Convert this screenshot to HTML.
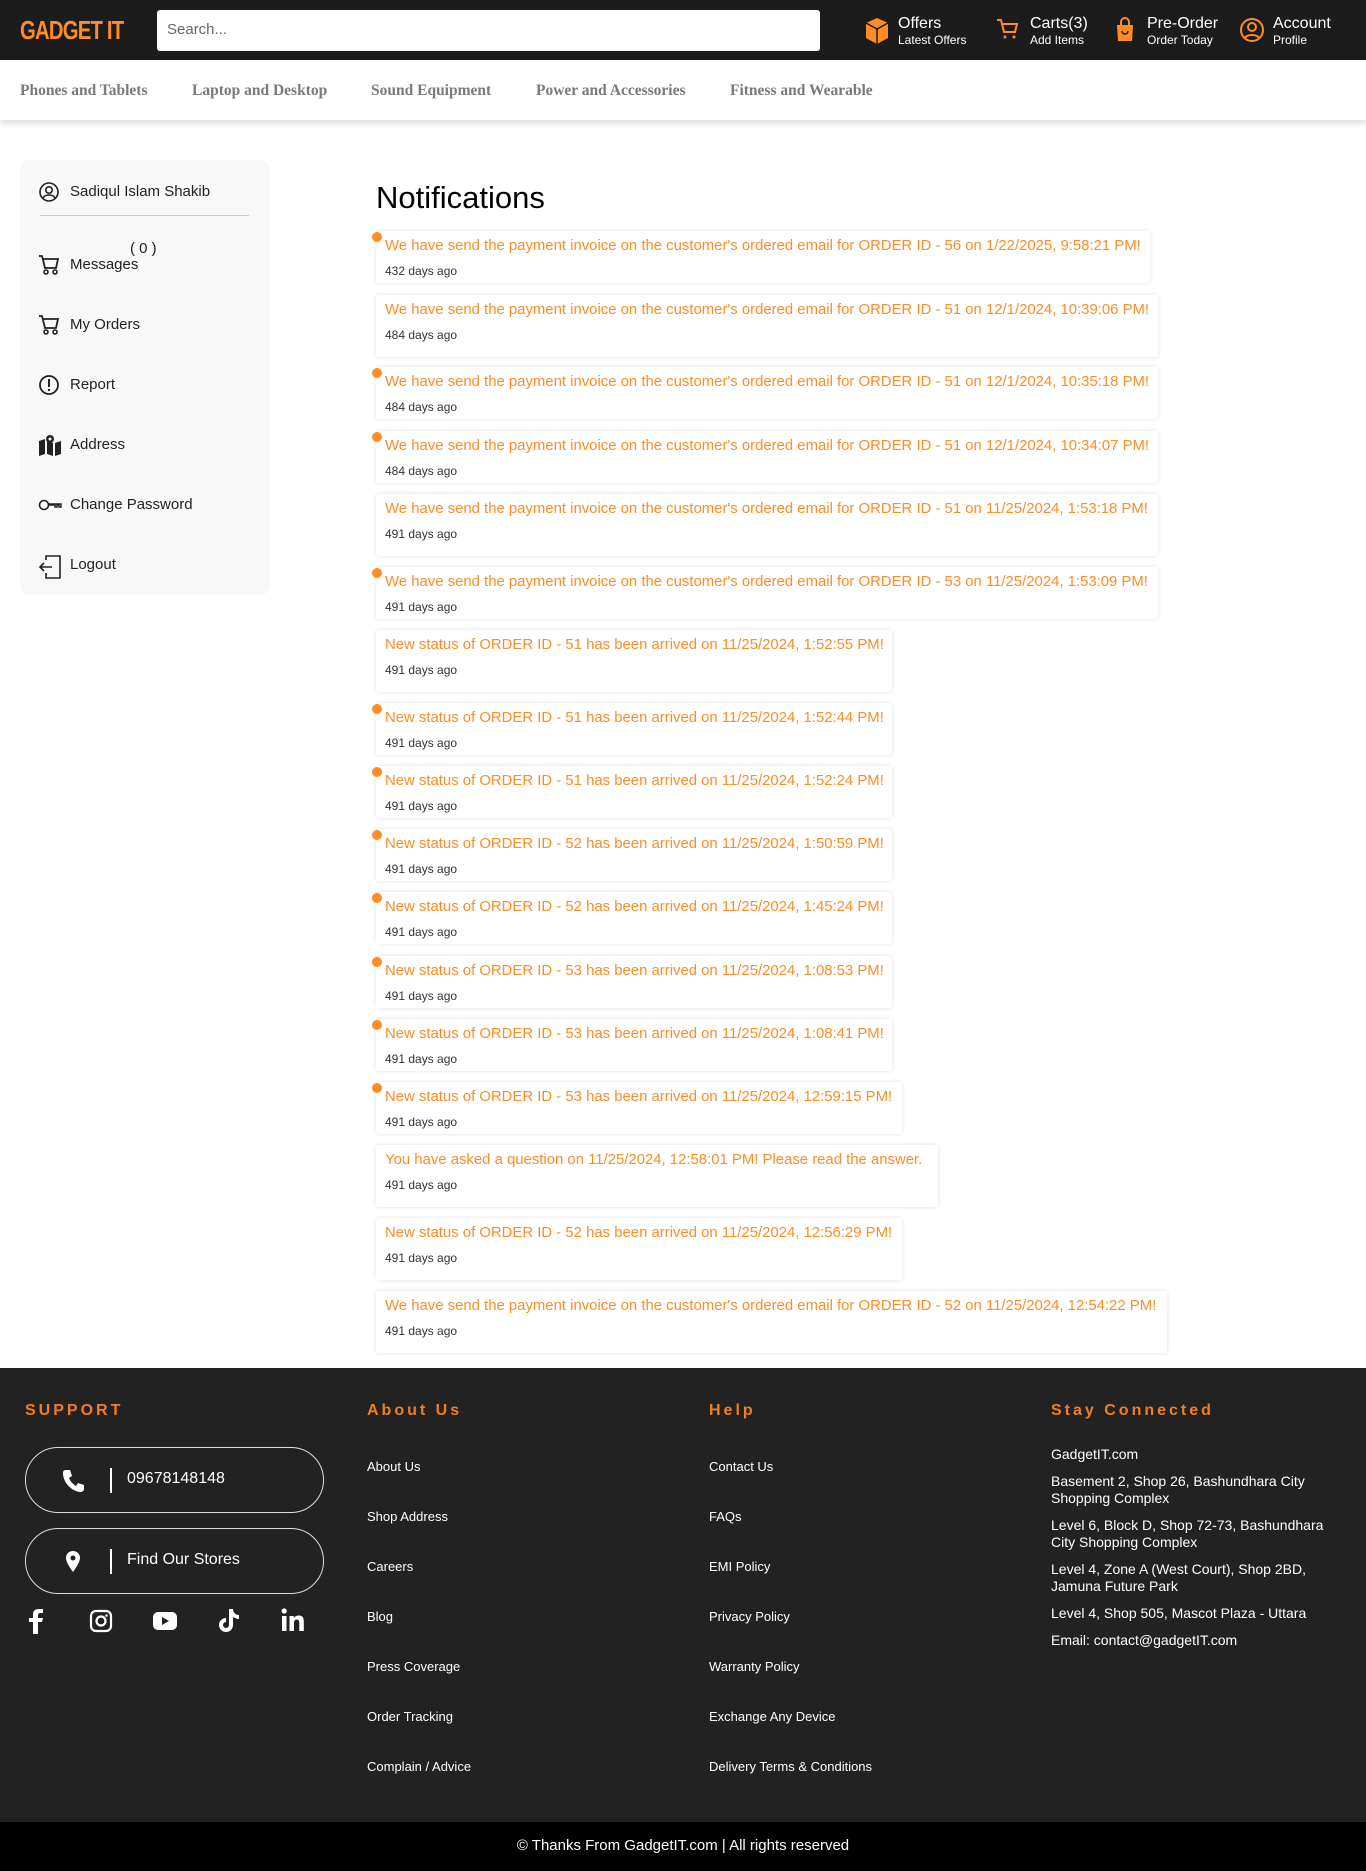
<!DOCTYPE html>
<html><head><meta charset="utf-8">
<style>
*{margin:0;padding:0;box-sizing:border-box}
body{width:1366px;height:1871px;position:relative;background:#fff;font-family:"Liberation Sans",sans-serif;overflow:hidden}
.hdr{position:absolute;left:0;top:0;width:1366px;height:60px;background:#1c1c1c;box-shadow:0 3px 6px rgba(0,0,0,.5)}
.logo{position:absolute;left:20px;top:14px;color:#ff8c26;font:bold 26px/32px "Liberation Sans Narrow","Liberation Sans",sans-serif;transform:scaleX(.78);transform-origin:left;letter-spacing:-1px}
.search{position:absolute;left:157px;top:10px;width:663px;height:41px;background:#fff;border-radius:3px;color:#666;font-size:15px;padding:11px 10px}
.hi{position:absolute;top:14px;color:#fff}
.hi b{display:block;font-weight:normal;font-size:16px;line-height:19px}
.hi s{display:block;text-decoration:none;font-size:12px;line-height:14px}
.hi svg{position:absolute;left:-34px;top:3px}
.nav{position:absolute;left:0;top:60px;width:1366px;height:60px;background:#fff;box-shadow:0 3px 6px rgba(0,0,0,.15)}
.nav span{position:absolute;top:22px;font:bold 15.5px "Liberation Serif",serif;color:#7a7a7a}
.side{position:absolute;left:20px;top:160px;width:250px;height:435px;background:#f8f8f8;border-radius:10px}
.si{position:absolute;left:50px;font-size:15px;color:#222}
.si svg{position:absolute;left:-12px;top:-2px}
.si{padding-left:20px}
h1{position:absolute;left:376px;top:180px;font-weight:normal;font-size:31px;color:#000}
.c{position:absolute;left:376px;background:#fff;box-shadow:0 0 5px rgba(0,0,0,.12);border-radius:3px;padding:6px 0 0 9px;white-space:nowrap;overflow:hidden}
.c p{color:#ff8c26;font-size:14.9px;line-height:18px}
.c i{display:block;font-style:normal;color:#333;font-size:12px;margin-top:9px}
.d{position:absolute;left:372px;width:10px;height:10px;border-radius:50%;background:#ff8c26}
.ft{position:absolute;left:0;top:1368px;width:1366px;height:454px;background:#222}
.bot{position:absolute;left:0;top:1822px;width:1366px;height:49px;background:#000;color:#fff;font-size:15px;text-align:center;line-height:48px}
.fh{position:absolute;top:34px;color:#f07f1f;font-weight:bold;font-size:16px;letter-spacing:3px}
.fl{position:absolute;color:#fff;font-size:13px}
.pill{position:absolute;left:25px;width:299px;height:66px;border:1.5px solid #ddd;border-radius:33px;color:#fff;font-size:16px}
.pill .bar{position:absolute;left:84px;top:20px;width:2px;height:25px;background:#fff}
.pill span{position:absolute;left:101px;top:22px}
</style></head><body>
<div class="hdr">
<div class="logo">GADGET IT</div>
<div class="search">Search...</div>
<div class="hi" style="left:898px"><svg width="26" height="28" viewBox="0 0 26 28"><path d="M13 1 2 6v15l11 6 11-6V6z" fill="#ff8c26"/><path d="M2 6l11 6 11-6M13 12v15" stroke="#1c1c1c" stroke-width="1.5" fill="none"/></svg><b>Offers</b><s>Latest Offers</s></div>
<div class="hi" style="left:1030px"><svg width="24" height="26" viewBox="0 0 24 26"><path d="M1 3h4l3 12h11l2-8H7" stroke="#ff8c26" stroke-width="2" fill="none"/><circle cx="9" cy="20" r="1.5" fill="#ff8c26"/><circle cx="18" cy="20" r="1.5" fill="#ff8c26"/></svg><b>Carts(3)</b><s>Add Items</s></div>
<div class="hi" style="left:1147px"><svg width="24" height="26" viewBox="0 0 24 26"><path d="M4 8h16l-1 16H5z" fill="#ff8c26"/><path d="M8 8V5a4 4 0 0 1 8 0v3" stroke="#ff8c26" stroke-width="2" fill="none"/><path d="M9 14a3 3 0 0 0 6 0" stroke="#1c1c1c" stroke-width="1.5" fill="none"/></svg><b>Pre-Order</b><s>Order Today</s></div>
<div class="hi" style="left:1273px"><svg width="26" height="26" viewBox="0 0 26 26"><circle cx="13" cy="13" r="11" stroke="#ff8c26" stroke-width="2" fill="none"/><circle cx="13" cy="10" r="4" stroke="#ff8c26" stroke-width="2" fill="none"/><path d="M6 21c2-4 12-4 14 0" stroke="#ff8c26" stroke-width="2" fill="none"/></svg><b>Account</b><s>Profile</s></div>
</div>
<div class="nav">
<span style="left:20px">Phones and Tablets</span><span style="left:192px">Laptop and Desktop</span><span style="left:371px">Sound Equipment</span><span style="left:536px">Power and Accessories</span><span style="left:730px">Fitness and Wearable</span>
</div>
<div class="side">
<div style="position:absolute;left:20px;top:55px;width:209px;height:1px;background:#ccc"></div>
</div>
<div class="si" style="left:50px;top:183px"><svg width="22" height="22" viewBox="0 0 22 22"><circle cx="11" cy="11" r="9" stroke="#222" stroke-width="1.6" fill="none"/><circle cx="11" cy="9" r="3.2" stroke="#222" stroke-width="1.6" fill="none"/><path d="M5 17c2-4 10-4 12 0" stroke="#222" stroke-width="1.6" fill="none"/></svg>Sadiqul Islam Shakib</div>
<div style="position:absolute;left:130px;top:240px;font-size:15px;color:#222">( 0 )</div>
<div class="si" style="left:50px;top:256px"><svg width="22" height="22" viewBox="0 0 22 22"><path d="M1 2h3l3 12h11l2-9H5" stroke="#222" stroke-width="1.8" fill="none"/><circle cx="8" cy="18" r="2" stroke="#222" stroke-width="1.6" fill="none"/><circle cx="17" cy="18" r="2" stroke="#222" stroke-width="1.6" fill="none"/></svg>Messages</div>
<div class="si" style="left:50px;top:316px"><svg width="22" height="22" viewBox="0 0 22 22"><path d="M1 2h3l3 12h11l2-9H5" stroke="#222" stroke-width="1.8" fill="none"/><circle cx="8" cy="18" r="2" stroke="#222" stroke-width="1.6" fill="none"/><circle cx="17" cy="18" r="2" stroke="#222" stroke-width="1.6" fill="none"/></svg>My Orders</div>
<div class="si" style="left:50px;top:376px"><svg width="22" height="22" viewBox="0 0 22 22"><circle cx="11" cy="11" r="9" stroke="#222" stroke-width="1.8" fill="none"/><path d="M11 5v8" stroke="#222" stroke-width="2"/><circle cx="11" cy="16" r="1.2" fill="#222"/></svg>Report</div>
<div class="si" style="left:50px;top:436px"><svg width="24" height="22" viewBox="0 0 24 22"><path d="M1 7l6-2v15l-6 2zM9 6l6 3v13l-6-2zM17 9l6-2v13l-6 2z" fill="#222"/><circle cx="12" cy="5" r="4" fill="#222"/><circle cx="12" cy="5" r="1.5" fill="#f8f8f8"/></svg>Address</div>
<div class="si" style="left:50px;top:496px"><svg width="24" height="22" viewBox="0 0 24 22"><circle cx="6" cy="11" r="4.5" stroke="#222" stroke-width="1.6" fill="none"/><path d="M10 10h13v3h-2v-2h-2v2h-2v-2h-7" stroke="#222" stroke-width="1.4" fill="none"/></svg>Change Password</div>
<div class="si" style="left:50px;top:556px"><svg width="24" height="26" viewBox="0 0 24 26"><path d="M8 6V2h14v22H8v-5" stroke="#222" stroke-width="1.6" fill="none"/><path d="M14 13H2m4-4-4 4 4 4" stroke="#222" stroke-width="1.6" fill="none"/></svg>Logout</div>

<h1>Notifications</h1>

<div class="c" style="top:231px;width:774px;height:52px"><p>We have send the payment invoice on the customer's ordered email for ORDER ID - 56 on 1/22/2025, 9:58:21 PM!</p><i>432 days ago</i></div><div class="d" style="top:232px"></div>
<div class="c" style="top:295px;width:782px;height:62px"><p>We have send the payment invoice on the customer's ordered email for ORDER ID - 51 on 12/1/2024, 10:39:06 PM!</p><i>484 days ago</i></div>
<div class="c" style="top:367px;width:782px;height:52px"><p>We have send the payment invoice on the customer's ordered email for ORDER ID - 51 on 12/1/2024, 10:35:18 PM!</p><i>484 days ago</i></div><div class="d" style="top:368px"></div>
<div class="c" style="top:431px;width:782px;height:52px"><p>We have send the payment invoice on the customer's ordered email for ORDER ID - 51 on 12/1/2024, 10:34:07 PM!</p><i>484 days ago</i></div><div class="d" style="top:432px"></div>
<div class="c" style="top:494px;width:782px;height:62px"><p>We have send the payment invoice on the customer's ordered email for ORDER ID - 51 on 11/25/2024, 1:53:18 PM!</p><i>491 days ago</i></div>
<div class="c" style="top:567px;width:782px;height:52px"><p>We have send the payment invoice on the customer's ordered email for ORDER ID - 53 on 11/25/2024, 1:53:09 PM!</p><i>491 days ago</i></div><div class="d" style="top:568px"></div>
<div class="c" style="top:630px;width:516px;height:62px"><p>New status of ORDER ID - 51 has been arrived on 11/25/2024, 1:52:55 PM!</p><i>491 days ago</i></div>
<div class="c" style="top:703px;width:516px;height:52px"><p>New status of ORDER ID - 51 has been arrived on 11/25/2024, 1:52:44 PM!</p><i>491 days ago</i></div><div class="d" style="top:704px"></div>
<div class="c" style="top:766px;width:516px;height:52px"><p>New status of ORDER ID - 51 has been arrived on 11/25/2024, 1:52:24 PM!</p><i>491 days ago</i></div><div class="d" style="top:767px"></div>
<div class="c" style="top:829px;width:516px;height:52px"><p>New status of ORDER ID - 52 has been arrived on 11/25/2024, 1:50:59 PM!</p><i>491 days ago</i></div><div class="d" style="top:830px"></div>
<div class="c" style="top:892px;width:516px;height:52px"><p>New status of ORDER ID - 52 has been arrived on 11/25/2024, 1:45:24 PM!</p><i>491 days ago</i></div><div class="d" style="top:893px"></div>
<div class="c" style="top:956px;width:516px;height:52px"><p>New status of ORDER ID - 53 has been arrived on 11/25/2024, 1:08:53 PM!</p><i>491 days ago</i></div><div class="d" style="top:957px"></div>
<div class="c" style="top:1019px;width:516px;height:52px"><p>New status of ORDER ID - 53 has been arrived on 11/25/2024, 1:08:41 PM!</p><i>491 days ago</i></div><div class="d" style="top:1020px"></div>
<div class="c" style="top:1082px;width:526px;height:52px"><p>New status of ORDER ID - 53 has been arrived on 11/25/2024, 12:59:15 PM!</p><i>491 days ago</i></div><div class="d" style="top:1083px"></div>
<div class="c" style="top:1145px;width:562px;height:62px"><p>You have asked a question on 11/25/2024, 12:58:01 PM! Please read the answer.</p><i>491 days ago</i></div>
<div class="c" style="top:1218px;width:526px;height:62px"><p>New status of ORDER ID - 52 has been arrived on 11/25/2024, 12:56:29 PM!</p><i>491 days ago</i></div>
<div class="c" style="top:1291px;width:791px;height:62px"><p>We have send the payment invoice on the customer's ordered email for ORDER ID - 52 on 11/25/2024, 12:54:22 PM!</p><i>491 days ago</i></div>

<div class="ft">
<div class="fh" style="left:25px">SUPPORT</div>
<div class="fh" style="left:367px">About Us</div>
<div class="fh" style="left:709px">Help</div>
<div class="fh" style="left:1051px">Stay Connected</div>
<div class="pill" style="top:79px"><svg style="position:absolute;left:35px;top:20px" width="24" height="26" viewBox="0 0 24 26"><path d="M5 2l4 0 2 6-3 2c1 3 4 6 7 8l2-3 6 2v4c0 2-2 3-4 3C10 23 2 14 2 5c0-2 1-3 3-3z" fill="#fff"/></svg><div class="bar"></div><span>09678148148</span></div>
<div class="pill" style="top:160px"><svg style="position:absolute;left:38px;top:21px" width="18" height="24" viewBox="0 0 18 24"><path d="M9 1a7 7 0 0 0-7 7c0 5 7 14 7 14s7-9 7-14a7 7 0 0 0-7-7z" fill="#fff"/><circle cx="9" cy="8" r="2.5" fill="#222"/></svg><div class="bar"></div><span>Find Our Stores</span></div>
<svg style="position:absolute;left:28px;top:240px" width="16" height="26" viewBox="0 0 16 26"><path d="M10 26V14h4l1-4h-5V7c0-1 1-2 2-2h3V1h-4C7 1 5 3 5 6v4H1v4h4v12z" fill="#fff"/></svg>
<svg style="position:absolute;left:89px;top:241px" width="24" height="24" viewBox="0 0 24 24"><rect x="2" y="2" width="20" height="20" rx="5" stroke="#fff" stroke-width="2.2" fill="none"/><circle cx="12" cy="12" r="4.5" stroke="#fff" stroke-width="2.2" fill="none"/><circle cx="17.5" cy="6.5" r="1.3" fill="#fff"/></svg>
<svg style="position:absolute;left:152px;top:243px" width="26" height="20" viewBox="0 0 26 20"><rect x="1" y="1" width="24" height="18" rx="5" fill="#fff"/><path d="M10 6v8l7-4z" fill="#222"/></svg>
<svg style="position:absolute;left:216px;top:239px" width="24" height="26" viewBox="0 0 24 26"><path d="M13 2h4c0 3 2 6 6 6v4c-2 0-4-1-6-2v8a7 7 0 1 1-7-7v4a3 3 0 1 0 3 3z" fill="#fff"/></svg>
<svg style="position:absolute;left:281px;top:240px" width="24" height="24" viewBox="0 0 24 24"><rect x="1" y="8" width="4.5" height="15" fill="#fff"/><circle cx="3.2" cy="3" r="2.6" fill="#fff"/><path d="M8.5 8h4.3v2c1-1.7 3-2.5 5-2.5 4 0 5 2.5 5 6V23h-4.5v-8c0-2-.5-3.5-2.5-3.5s-2.8 1.5-2.8 3.5v8H8.5z" fill="#fff"/></svg>
<div class="fl" style="left:367px;top:91px">About Us</div>
<div class="fl" style="left:367px;top:141px">Shop Address</div>
<div class="fl" style="left:367px;top:191px">Careers</div>
<div class="fl" style="left:367px;top:241px">Blog</div>
<div class="fl" style="left:367px;top:291px">Press Coverage</div>
<div class="fl" style="left:367px;top:341px">Order Tracking</div>
<div class="fl" style="left:367px;top:391px">Complain / Advice</div>
<div class="fl" style="left:709px;top:91px">Contact Us</div>
<div class="fl" style="left:709px;top:141px">FAQs</div>
<div class="fl" style="left:709px;top:191px">EMI Policy</div>
<div class="fl" style="left:709px;top:241px">Privacy Policy</div>
<div class="fl" style="left:709px;top:291px">Warranty Policy</div>
<div class="fl" style="left:709px;top:341px">Exchange Any Device</div>
<div class="fl" style="left:709px;top:391px">Delivery Terms &amp; Conditions</div>
<div class="fl" style="left:1051px;top:78px;font-size:14px;line-height:17px;width:290px">GadgetIT.com</div>
<div class="fl" style="left:1051px;top:105px;font-size:14px;line-height:17px;width:290px">Basement 2, Shop 26, Bashundhara City Shopping Complex</div>
<div class="fl" style="left:1051px;top:149px;font-size:14px;line-height:17px;width:290px">Level 6, Block D, Shop 72-73, Bashundhara City Shopping Complex</div>
<div class="fl" style="left:1051px;top:193px;font-size:14px;line-height:17px;width:290px">Level 4, Zone A (West Court), Shop 2BD, Jamuna Future Park</div>
<div class="fl" style="left:1051px;top:237px;font-size:14px;line-height:17px;width:290px">Level 4, Shop 505, Mascot Plaza - Uttara</div>
<div class="fl" style="left:1051px;top:264px;font-size:14px;line-height:17px;width:290px">Email: contact@gadgetIT.com</div>
</div>
<div class="bot">© Thanks From GadgetIT.com | All rights reserved</div>
</body></html>
